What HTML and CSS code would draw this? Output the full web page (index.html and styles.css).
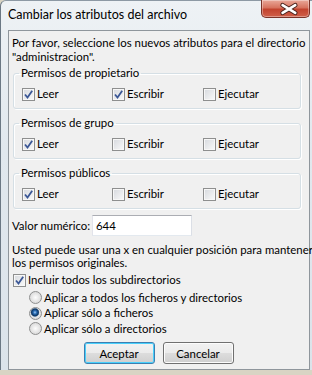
FILE: index.html
```html
<!DOCTYPE html>
<html lang="es">
<head>
    <meta charset="UTF-8">
    <meta name="viewport" content="width=device-width, initial-scale=1.0">
    <title>Cambiar los atributos del archivo</title>
    <link rel="stylesheet" href="styles.css">
</head>
<body>
    <div class="window">
        <div class="titlebar">
            <span class="title">Cambiar los atributos del archivo</span>
            <button class="close" type="button">
                <svg width="49" height="18" viewBox="0 0 49 18">
                    <path d="M22 5 L35 13 M35 5 L22 13" stroke="#4a231d" stroke-width="4.6" stroke-linecap="round"/>
                    <path d="M22 5 L35 13 M35 5 L22 13" stroke="#ffffff" stroke-width="2.6" stroke-linecap="round"/>
                </svg>
            </button>
        </div>

        <div class="panel">
            <p class="intro">Por favor, seleccione los nuevos atributos para el directorio<br>"administracion".</p>

            <fieldset class="group">
                <legend>Permisos de propietario</legend>
                <div class="perms">
                    <label class="check"><span class="box on"><svg width="11" height="11" viewBox="0 0 11 11"><path d="M2 5.5 L4.5 8.5 L9.2 1.8" fill="none" stroke="#3b5796" stroke-width="1.8"/></svg></span>Leer</label>
                    <label class="check"><span class="box on"><svg width="11" height="11" viewBox="0 0 11 11"><path d="M2 5.5 L4.5 8.5 L9.2 1.8" fill="none" stroke="#3b5796" stroke-width="1.8"/></svg></span>Escribir</label>
                    <label class="check"><span class="box"></span>Ejecutar</label>
                </div>
            </fieldset>

            <fieldset class="group">
                <legend>Permisos de grupo</legend>
                <div class="perms">
                    <label class="check"><span class="box on"><svg width="11" height="11" viewBox="0 0 11 11"><path d="M2 5.5 L4.5 8.5 L9.2 1.8" fill="none" stroke="#3b5796" stroke-width="1.8"/></svg></span>Leer</label>
                    <label class="check"><span class="box"></span>Escribir</label>
                    <label class="check"><span class="box"></span>Ejecutar</label>
                </div>
            </fieldset>

            <fieldset class="group">
                <legend>Permisos públicos</legend>
                <div class="perms">
                    <label class="check"><span class="box on"><svg width="11" height="11" viewBox="0 0 11 11"><path d="M2 5.5 L4.5 8.5 L9.2 1.8" fill="none" stroke="#3b5796" stroke-width="1.8"/></svg></span>Leer</label>
                    <label class="check"><span class="box"></span>Escribir</label>
                    <label class="check"><span class="box"></span>Ejecutar</label>
                </div>
            </fieldset>

            <div class="value-row">
                <span class="value-label">Valor numérico:</span>
                <span class="textbox">644</span>
            </div>

            <p class="note">Usted puede usar una x en cualquier posición para mantener<br>los permisos originales.</p>

            <label class="check sub"><span class="box on"><svg width="11" height="11" viewBox="0 0 11 11"><path d="M2 5.5 L4.5 8.5 L9.2 1.8" fill="none" stroke="#3b5796" stroke-width="1.8"/></svg></span>Incluir todos los subdirectorios</label>

            <div class="radios">
                <label class="radio"><span class="dot"></span>Aplicar a todos los ficheros y directorios</label>
                <label class="radio"><span class="dot on"></span>Aplicar sólo a ficheros</label>
                <label class="radio"><span class="dot"></span>Aplicar sólo a directorios</label>
            </div>

            <div class="buttons">
                <button class="btn default" type="button">Aceptar</button>
                <button class="btn" type="button">Cancelar</button>
            </div>
        </div>
    </div>
</body>
</html>
```

FILE: styles.css
```css
body {
    margin: 0;
    width: 312px;
    height: 375px;
    overflow: hidden;
    font-family: Lato, "Open Sans", sans-serif;
    font-size: 11.4px;
    color: #000;
    background: #d9d4c4;
}

.window {
    box-sizing: border-box;
    height: 370px;
    padding-left: 7px;
    border-left: 1px solid #6b7884;
    border-top: 1px solid #8d99a4;
    border-radius: 6px 0 0 0;
    background: linear-gradient(#eef2f5, #e1e8ee 40%, #dbe3ea);
}

.titlebar {
    display: flex;
    justify-content: space-between;
    align-items: flex-start;
    height: 29px;
}

.title {
    padding-top: 6px;
    line-height: 16px;
    font-size: 12.5px;
}

.close {
    width: 49px;
    height: 18px;
    margin: -1px 2px 0 0;
    padding: 0;
    border: 1px solid #7a3328;
    border-top: none;
    border-radius: 0 0 5px 5px;
    background: linear-gradient(#e9a899, #d7735f 45%, #c2432e 55%, #d0604a);
    box-shadow: inset 0 0 0 1px rgba(255, 255, 255, 0.35);
    display: flex;
    align-items: center;
    justify-content: center;
}

.close svg {
    display: block;
    margin-left: -1px;
}

.panel {
    box-sizing: border-box;
    width: 302px;
    height: 340px;
    padding: 5px 3px 0 3px;
    border: 1px solid #8f969c;
    background: #f0f0f0;
}

.intro {
    margin: 0;
    line-height: 14px;
    white-space: nowrap;
}

.group {
    box-sizing: border-box;
    height: 43px;
    margin: 2px 5px 0 1px;
    padding: 6px 0 0 8px;
    border: 1px solid #d5dfe5;
    border-radius: 3px;
    box-shadow: inset 1px 1px 0 #fff, 1px 1px 0 #fff;
}

.group + .group {
    margin-top: 7px;
}

.group legend {
    margin-left: -3px;
    padding: 0 2px;
    line-height: 14px;
    height: 14px;
}

.perms {
    display: grid;
    grid-template-columns: 90px 91px auto;
    height: 16px;
    align-items: center;
}

.check,
.radio {
    display: flex;
    align-items: center;
    gap: 2px;
    line-height: 16px;
    white-space: nowrap;
}

.box {
    flex-shrink: 0;
    box-sizing: border-box;
    width: 13px;
    height: 13px;
    border: 1px solid #8e8f8f;
    background: linear-gradient(135deg, #d6d9de, #fafafa);
    box-shadow: inset 0 0 0 1px #f7f7f7;
    display: flex;
    align-items: center;
    justify-content: center;
}

.box svg {
    display: block;
}

.value-row {
    display: flex;
    align-items: center;
    height: 21px;
    margin-top: 6px;
}

.value-label {
    flex-shrink: 0;
    width: 80px;
    white-space: nowrap;
}

.textbox {
    box-sizing: border-box;
    width: 100px;
    height: 21px;
    padding-left: 3px;
    line-height: 19px;
    border: 1px solid;
    border-color: #abadb3 #dbdfe6 #e3e9ef #e2e3ea;
    background: #fff;
}

.note {
    margin: 7px 0 0;
    line-height: 13px;
    white-space: nowrap;
}

.sub {
    height: 16px;
    margin: 3px 0 0 1px;
}

.radios {
    margin: 2px 0 0 17px;
}

.radio {
    height: 15.5px;
}

.dot {
    flex-shrink: 0;
    box-sizing: border-box;
    width: 13px;
    height: 13px;
    border: 1px solid #8e8f8f;
    border-radius: 50%;
    background: radial-gradient(circle at 50% 50%, #fdfdfd, #dcdcdc 70%, #cfcfcf);
}

.dot.on {
    background: radial-gradient(circle at 45% 40%, #a9cdf2 0, #2a6fb8 1.6px, #0f3560 3.4px, #6f8fb0 4.2px, transparent 4.6px),
        radial-gradient(circle at 50% 50%, #fdfdfd, #dcdcdc 70%, #cfcfcf);
}

.buttons {
    display: flex;
    justify-content: center;
    gap: 8px;
    margin-top: 5.5px;
    padding-right: 1px;
}

.btn {
    box-sizing: border-box;
    width: 71px;
    height: 22px;
    padding: 0;
    font-family: inherit;
    font-size: 11.4px;
    color: #000;
    border: 1px solid #707070;
    border-radius: 3px;
    background: linear-gradient(#f2f2f2, #ebebeb 49%, #dddddd 50%, #cfcfcf);
    box-shadow: inset 0 0 0 1px #fcfcfc;
}

.btn.default {
    border-color: #3c7fb1;
    box-shadow: inset 0 0 0 1px #48d0fc;
}
```
